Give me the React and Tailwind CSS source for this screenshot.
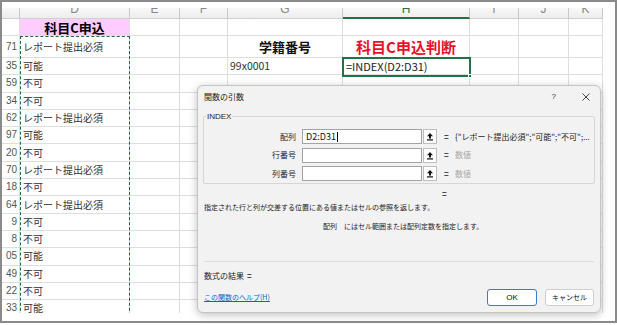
import React from "react";

const W = ["w-[18px]", "w-[110px]", "w-[50px]", "w-[48px]", "w-[115px]", "w-[127px]", "w-[49px]", "w-[50px]", "w-[34px]"];
const LETTERS = ["C", "D", "E", "F", "G", "H", "I", "J", "K"];

const rows = [
  ["71", "レポート提出必須"],
  ["35", "可能"],
  ["59", "不可"],
  ["34", "不可"],
  ["62", "レポート提出必須"],
  ["97", "可能"],
  ["20", "不可"],
  ["70", "レポート提出必須"],
  ["18", "不可"],
  ["64", "レポート提出必須"],
  ["9", "不可"],
  ["8", "不可"],
  ["05", "可能"],
  ["49", "不可"],
  ["22", "不可"],
  ["33", "可能"],
];

function Cell({ i, className = "", children }) {
  return (
    <div className={`${W[i]} shrink-0 h-full border-r border-b border-[#dedede] flex items-center overflow-hidden whitespace-nowrap ${className}`}>
      {children}
    </div>
  );
}

function RefIcon() {
  return (
    <svg width="8" height="9" viewBox="0 0 8 9">
      <path d="M4 1 L7 4.2 H5 V6.5 H3 V4.2 H1 Z" fill="#111" />
      <rect x="1" y="7.3" width="6" height="1.2" fill="#111" />
    </svg>
  );
}

function FieldRow({ label, value, gray }) {
  return (
    <div className="flex items-center h-[15px]">
      <div className="w-[92px] text-right text-[8px] leading-none text-[#222]">{label}</div>
      <div className="ml-[6px] w-[120px] h-[15px] bg-white border border-[#a3a3a3] flex items-center pl-[3px] text-[9px] leading-none text-[#111]">
        {value}
        {value && <span className="inline-block w-px h-[10px] bg-black ml-[1px]" />}
      </div>
      <div className="ml-px w-[14px] h-[15px] bg-white border border-[#bdbdbd] flex items-center justify-center">
        <RefIcon />
      </div>
      <div className="ml-[7px] w-[6px] text-[8px] font-bold leading-none text-[#222]">=</div>
      <div className={`ml-[5px] text-[8px] leading-none whitespace-nowrap ${gray ? "text-[#a8a8a8]" : "text-[#222]"}`}>
        {gray ? "数値" : "{\"レポート提出必須\";\"可能\";\"不可\";..."}
      </div>
    </div>
  );
}

export default function App() {
  return (
    <div className="relative w-[617px] h-[323px] border-2 border-[#8a8a8a] bg-white overflow-hidden font-['Noto_Sans_CJK_JP','Noto_Sans',sans-serif]">
      <div className="pt-[6px]">
        <div className="relative w-[601px] h-[305px] overflow-hidden">
          {/* column header */}
          <div className="flex h-[11px] bg-gradient-to-b from-[#f8f8f8] to-[#ececec]">
            {LETTERS.map((l, i) => (
              <div
                key={l}
                className={`${W[i]} shrink-0 h-full border-r border-[#c9c9c9] ${i === 5 ? "border-b-2 border-b-[#217346]" : "border-b border-b-[#cfcfcf]"} flex justify-center overflow-hidden`}
              >
                <span className={`text-[12px] leading-[12px] -mt-[5px] font-['Liberation_Sans',sans-serif] ${i === 5 ? "text-[#217346]" : "text-[#888]"}`}>
                  {i === 0 ? "" : l}
                </span>
              </div>
            ))}
          </div>

          {/* row 1 */}
          <div className="flex h-[17px]">
            <Cell i={0} />
            <Cell i={1} className="bg-[#ffccff] justify-center">
              <span className="text-[13px] font-bold leading-none text-black">科目C申込</span>
            </Cell>
            {[2, 3, 4, 5, 6, 7, 8].map((i) => (
              <Cell key={i} i={i} />
            ))}
          </div>

          {/* data rows */}
          {rows.map(([n, t], r) => (
            <div key={r} className={`flex ${r === 0 ? "h-[22px]" : "h-[17.3px]"}`}>
              <Cell i={0} className="justify-end pr-[2px]">
                <span className="text-[10px] leading-none text-[#555] font-['Liberation_Sans',sans-serif]">{n}</span>
              </Cell>
              <Cell i={1} className="pl-[3px]">
                <span className="text-[10px] leading-none text-[#333]">{t}</span>
              </Cell>
              <Cell i={2} />
              <Cell i={3} />
              <Cell i={4} className={r === 0 ? "justify-center" : "pl-[2px]"}>
                {r === 0 && <span className="text-[13px] font-bold leading-none text-[#111]">学籍番号</span>}
                {r === 1 && <span className="text-[10.5px] leading-none text-[#333]">99x0001</span>}
              </Cell>
              <Cell i={5} className={r === 0 ? "justify-center" : "pl-[3px]"}>
                {r === 0 && <span className="text-[15px] font-bold leading-none text-[#e8102a]">科目C申込判断</span>}
                {r === 1 && <span className="text-[11px] leading-none text-[#222]">=INDEX(D2:D31)</span>}
              </Cell>
              <Cell i={6} />
              <Cell i={7} />
              <Cell i={8} />
            </div>
          ))}

          {/* copy marquee */}
          <div className="absolute left-[18px] top-[28px] w-[110px] h-[300px] border-[1.5px] border-dashed border-[#1d6b42]" />
          {/* selected cell */}
          <div className="absolute left-[340px] top-[49px] w-[129px] h-[20px] border-2 border-[#217346]">
            <div className="absolute -right-[3px] -bottom-[3px] w-[4px] h-[4px] bg-[#217346] border border-white" />
          </div>
        </div>
      </div>

      {/* dialog */}
      <div className="absolute left-[195px] top-[83px] w-[404px] h-[228px] bg-[#f2f2f2] border border-[#c4c4c4] rounded-[6px] shadow-[0_2px_8px_rgba(0,0,0,0.25)]">
        <div className="h-[22px] flex items-center pl-[6px] pr-[10px]">
          <span className="text-[8px] leading-none text-[#222]">関数の引数</span>
          <span className="ml-auto text-[8px] leading-none text-[#333] font-['Liberation_Sans',sans-serif]">?</span>
          <svg className="ml-[26px]" width="8" height="8" viewBox="0 0 8 8">
            <path d="M0.5 0.5 L7.5 7.5 M7.5 0.5 L0.5 7.5" stroke="#333" strokeWidth="0.9" />
          </svg>
        </div>

        <fieldset className="mx-[5px] mt-[3px] h-[73px] border border-[#d6d6d6] rounded-[2px] px-0">
          <legend className="ml-[2px] px-px text-[8px] leading-[11px] text-[#222] font-['Liberation_Sans',sans-serif]">INDEX</legend>
          <div className="mt-[7px] flex flex-col gap-[3.5px]">
            <FieldRow label="配列" value="D2:D31" />
            <FieldRow label="行番号" gray />
            <FieldRow label="列番号" gray />
          </div>
        </fieldset>

        <div className="h-[14px] mt-[3px] flex items-center pl-[244px]">
          <span className="text-[8px] font-bold leading-none text-[#222]">=</span>
        </div>
        <div className="h-[12px] flex items-center pl-[6px] text-[7px] leading-none text-[#222] whitespace-nowrap">
          指定された行と列が交差する位置にある値またはセルの参照を返します。
        </div>
        <div className="h-[12px] mt-[7px] flex items-center pl-[125px] text-[7px] leading-none text-[#222] whitespace-nowrap">
          <span>配列</span>
          <span className="ml-[7px]">にはセル範囲または配列定数を指定します。</span>
        </div>
        <div className="mx-[6px] mt-[29px] border-t border-[#dcdcdc]" />
        <div className="h-[12px] mt-[8px] flex items-center pl-[6px] text-[8px] leading-none text-[#222]">
          数式の結果 <span className="ml-[3px] font-bold">=</span>
        </div>
        <div className="h-[17px] mt-[7px] flex items-center pl-[6px] pr-[6px]">
          <span className="text-[7px] leading-none text-[#0a66c2] underline">この関数のヘルプ(H)</span>
          <button className="ml-auto w-[50px] h-[17px] bg-white border border-[#2f7fd1] rounded-[3px] text-[8px] leading-none text-[#111] font-['Liberation_Sans',sans-serif]">
            OK
          </button>
          <button className="ml-[8px] w-[49px] h-[17px] bg-white border border-[#cfcfcf] rounded-[3px] text-[7px] leading-none text-[#111]">
            キャンセル
          </button>
        </div>
      </div>
    </div>
  );
}
